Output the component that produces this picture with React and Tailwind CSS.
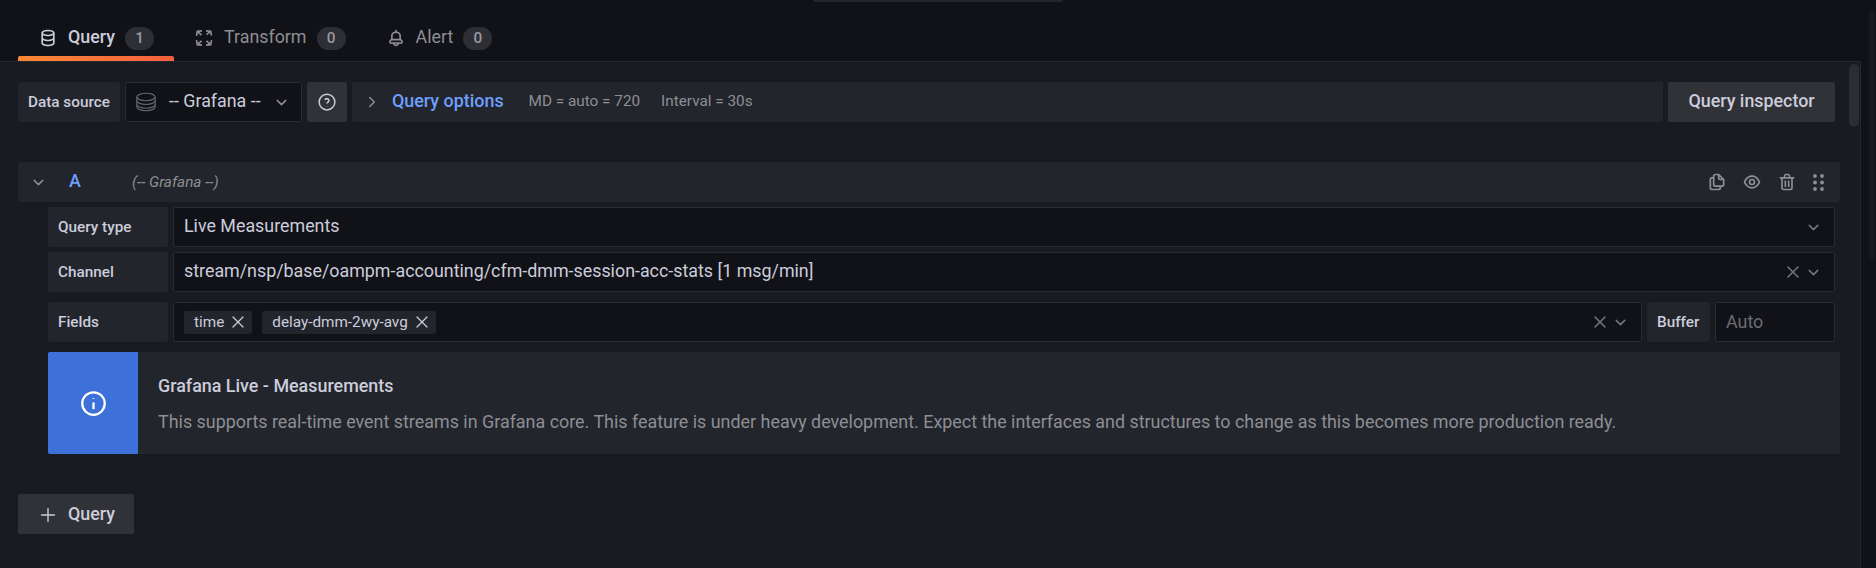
import { ChevronDown, ChevronRight, Plus, X } from 'lucide-react'

const font = { fontFamily: 'Roboto, sans-serif' }

function DbIcon({ className }) {
    return (
        <svg viewBox="0 0 24 24" fill="currentColor" className={className}>
            <path d="M12,2C8,2,4,3.37,4,6V18c0,2.63,4,4,8,4s8-1.37,8-4V6C20,3.37,16,2,12,2Zm6,16c0,.71-2.28,2-6,2s-6-1.29-6-2V14.73A13.16,13.16,0,0,0,12,16a13.16,13.16,0,0,0,6-1.27Zm0-6c0,.71-2.28,2-6,2s-6-1.29-6-2V8.73A13.16,13.16,0,0,0,12,10a13.16,13.16,0,0,0,6-1.27ZM12,8C8.28,8,6,6.71,6,6s2.28-2,6-2,6,1.29,6,2S15.72,8,12,8Z" />
        </svg>
    )
}

function StackIcon({ className }) {
    return (
        <svg viewBox="0 0 24 24" fill="none" stroke="currentColor" strokeWidth="1.4" className={className}>
            <ellipse cx="12" cy="6" rx="11" ry="4.5" />
            <path d="M1 6v4.5c0 2.5 4.9 4.5 11 4.5s11-2 11-4.5V6" />
            <path d="M1 10.5v4.5c0 2.5 4.9 4.5 11 4.5s11-2 11-4.5v-4.5" />
            <path d="M1 15v3c0 2.5 4.9 4.5 11 4.5s11-2 11-4.5v-3" />
        </svg>
    )
}

function TransformIcon({ className }) {
    return (
        <svg viewBox="0 0 24 24" fill="none" stroke="currentColor" strokeWidth="2" className={className}>
            <path d="M3 9.5L4 4l5.5-.5" />
            <path d="M4 4l5 4.5" />
            <path d="M14.5 3.5L20 4l1 5" />
            <path d="M15 8l5-4" />
            <path d="M3 14.5L4 20l5.5 .5" />
            <path d="M4 20l5-4.5" />
            <path d="M21 14.5L20 20l-5.5 .5" />
            <path d="M20 20l-5-4.5" />
        </svg>
    )
}

function BellIcon({ className }) {
    return (
        <svg viewBox="0 0 24 24" fill="currentColor" className={className}>
            <path d="M18,13.18V10a6,6,0,0,0-5-5.91V3a1,1,0,0,0-2,0V4.09A6,6,0,0,0,6,10v3.18A3,3,0,0,0,4,16v2a1,1,0,0,0,1,1H8.14a4,4,0,0,0,7.72,0H19a1,1,0,0,0,1-1V16A3,3,0,0,0,18,13.18ZM8,10a4,4,0,0,1,8,0v3H8Zm4,10a2,2,0,0,1-1.72-1h3.44A2,2,0,0,1,12,20Zm6-3H6V16a1,1,0,0,1,1-1H17a1,1,0,0,1,1,1Z" />
        </svg>
    )
}

function Label({ children, className = '' }) {
    return (
        <div className={`flex items-center h-10 pl-[10px] pt-[1px] whitespace-nowrap rounded-[3px] bg-[#22252b] text-[#ccccdc] text-[15.3px] font-medium ${className}`}>
            {children}
        </div>
    )
}

function Tab({ icon: Icon, label, count, active }) {
    return (
        <div className={`relative flex items-center h-[61px] pt-[15px] pl-5 pr-5 ${active ? 'text-[#ccccdc]' : 'text-[#8e8e93]'}`}>
            <Icon className="w-5 h-5 mr-[10px]" />
            <span className={`text-[17.85px] -mt-[2px] ${active ? 'font-medium' : ''}`}>{label}</span>
            <span className="ml-[10px] w-[29px] h-[23px] rounded-full bg-[#2d2f35] flex items-center justify-center text-[15.3px] text-[#9a9a9f] font-medium">{count}</span>
            {active && <div className="absolute left-0 right-0 bottom-0 h-[5px] rounded-t-[2px] bg-gradient-to-r from-[#ff8833] to-[#f55f3e]" />}
        </div>
    )
}

export default function App() {
    return (
        <div style={font} className="relative w-[1876px] h-[568px] overflow-hidden bg-[#111217] text-[#ccccdc]">
            <div className="absolute left-[813px] top-0 w-[250px] h-[2px] rounded-b-[2px] bg-[#23252b]" />
            <div className="absolute right-[1px] top-[10px] w-[6px] h-[250px] rounded-full bg-[#17191e]" />
            <div className="flex pl-[18px]">
                <Tab icon={DbIcon} label="Query" count="1" active />
                <Tab icon={TransformIcon} label="Transform" count="0" />
                <Tab icon={BellIcon} label="Alert" count="0" />
            </div>
            <div className="relative h-[507px] w-[1861px] bg-[#181b1f] border-t border-r border-[#25272c] pl-[18px] pr-[25px] pt-[20px]">
                <div className="absolute right-[1px] top-[2px] w-[10px] h-[63px] rounded-full bg-[#2b2d33]" />

                <div className="flex gap-[5px] h-10">
                    <Label className="w-[102px]">Data source</Label>
                    <div className="flex items-center w-[177px] h-10 rounded-[2px] border border-[#2a2c31] bg-[#111217] pl-[10px] text-[#ccccdc]">
                        <StackIcon className="w-5 h-5 text-[#66676c] mr-[13px]" />
                        <span className="text-[17.85px] -mt-[2px] whitespace-nowrap">-- Grafana --</span>
                        <ChevronDown className="w-[17px] h-[17px] ml-[12px] text-[#8e8e93] shrink-0" />
                    </div>
                    <div className="flex items-center justify-center w-10 h-10 rounded-[2px] bg-[#303237]">
                        <svg viewBox="0 0 24 24" fill="none" stroke="currentColor" strokeWidth="2" className="w-[18px] h-[18px] text-[#ccccdc]">
                            <circle cx="12" cy="12" r="10.5" />
                            <path d="M9.3 9.3a2.8 2.8 0 0 1 5.4.8c0 1.8-2.7 2.2-2.7 3.8" />
                            <path d="M12 17.2v.3" />
                        </svg>
                    </div>
                    <div className="flex-1 flex items-center h-10 rounded-[2px] bg-[#22252b] pl-[11px]">
                        <ChevronRight className="w-[18px] h-[18px] text-[#8e8e93]" />
                        <span className="ml-[11px] -mt-[2px] text-[17.9px] font-medium text-[#6e9fff]">Query options</span>
                        <span className="ml-[25px] -mt-[1px] text-[15.3px] text-[#8e8e93]">MD = auto = 720</span>
                        <span className="ml-[21px] -mt-[1px] text-[15.3px] text-[#8e8e93]">Interval = 30s</span>
                    </div>
                    <div className="flex items-center justify-center w-[167px] h-10 pb-[2px] rounded-[2px] bg-[#303237] text-[17.85px] font-medium text-[#ccccdc]">Query inspector</div>
                </div>

                <div className="mt-10 w-[1822px] flex items-center h-10 rounded-[2px] bg-[#22252b] pl-[12px] pr-[16px]">
                    <ChevronDown className="w-[17px] h-[17px] text-[#8e8e93]" />
                    <span className="ml-[22px] -mt-[2px] w-[63px] text-[17.85px] font-medium text-[#6e9fff]">A</span>
                    <span className="text-[15.3px] italic text-[#8e8e93]">(-- Grafana --)</span>
                    <div className="ml-auto flex items-center gap-[15px] text-[#8e8e93]">
                        <svg viewBox="0 0 24 24" fill="currentColor" className="w-5 h-5">
                            <path d="M21,8.94a1.31,1.31,0,0,0-.06-.27l0-.09a1.07,1.07,0,0,0-.19-.28h0l-6-6h0a1.07,1.07,0,0,0-.28-.19.32.32,0,0,0-.09,0A.88.88,0,0,0,14.05,2H10A3,3,0,0,0,7,5V6H6A3,3,0,0,0,3,9V19a3,3,0,0,0,3,3h8a3,3,0,0,0,3-3V18h1a3,3,0,0,0,3-3V9S21,9,21,8.94ZM15,5.41,17.59,8H16a1,1,0,0,1-1-1ZM15,19a1,1,0,0,1-1,1H6a1,1,0,0,1-1-1V9A1,1,0,0,1,6,8H7v7a3,3,0,0,0,3,3h5Zm4-4a1,1,0,0,1-1,1H10a1,1,0,0,1-1-1V5a1,1,0,0,1,1-1h3V7a3,3,0,0,0,3,3h3Z" />
                        </svg>
                        <svg viewBox="0 0 24 24" fill="currentColor" className="w-5 h-5">
                            <path d="M21.92,11.6C19.9,6.91,16.1,4,12,4S4.1,6.91,2.08,11.6a1,1,0,0,0,0,.8C4.1,17.09,7.9,20,12,20s7.9-2.91,9.92-7.6A1,1,0,0,0,21.92,11.6ZM12,18c-3.17,0-6.17-2.29-7.9-6C5.83,8.29,8.83,6,12,6s6.17,2.29,7.9,6C18.17,15.71,15.17,18,12,18ZM12,8a4,4,0,1,0,4,4A4,4,0,0,0,12,8Zm0,6a2,2,0,1,1,2-2A2,2,0,0,1,12,14Z" />
                        </svg>
                        <svg viewBox="0 0 24 24" fill="currentColor" className="w-5 h-5">
                            <path d="M10,18a1,1,0,0,0,1-1V11a1,1,0,0,0-2,0v6A1,1,0,0,0,10,18ZM20,6H16V5a3,3,0,0,0-3-3H11A3,3,0,0,0,8,5V6H4A1,1,0,0,0,4,8H5V19a3,3,0,0,0,3,3h8a3,3,0,0,0,3-3V8h1a1,1,0,0,0,0-2ZM10,5a1,1,0,0,1,1-1h2a1,1,0,0,1,1,1V6H10Zm7,14a1,1,0,0,1-1,1H8a1,1,0,0,1-1-1V8H17Zm-3-1a1,1,0,0,0,1-1V11a1,1,0,0,0-2,0v6A1,1,0,0,0,14,18Z" />
                        </svg>
                        <svg viewBox="0 0 11 17" fill="currentColor" className="ml-[1px] w-[11px] h-[17px]">
                            <circle cx="2" cy="2" r="1.9" /><circle cx="9" cy="2" r="1.9" />
                            <circle cx="2" cy="8.5" r="1.9" /><circle cx="9" cy="8.5" r="1.9" />
                            <circle cx="2" cy="15" r="1.9" /><circle cx="9" cy="15" r="1.9" />
                        </svg>
                    </div>
                </div>

                <div className="ml-[30px] w-[1792px]">
                    <div className="mt-[5px] flex gap-[5px] w-[1787px]">
                        <Label className="w-[120px]">Query type</Label>
                        <div className="flex-1 flex items-center h-10 rounded-[2px] border border-[#2a2c31] bg-[#111217] pl-[10px] pr-[12px] text-[17.85px]">
                            <span className="-mt-[2px]">Live Measurements</span>
                            <ChevronDown className="ml-auto w-[17px] h-[17px] text-[#77787d]" />
                        </div>
                    </div>
                    <div className="mt-[5px] flex gap-[5px] w-[1787px]">
                        <Label className="w-[120px]">Channel</Label>
                        <div className="flex-1 flex items-center h-10 rounded-[2px] border border-[#2a2c31] bg-[#111217] pl-[10px] pr-[12px] text-[17.85px]">
                            <span className="-mt-[2px]">stream/nsp/base/oampm-accounting/cfm-dmm-session-acc-stats [1 msg/min]</span>
                            <X className="ml-auto w-5 h-5 text-[#77787d]" strokeWidth={1.8} />
                            <ChevronDown className="ml-[2px] w-[17px] h-[17px] text-[#77787d]" />
                        </div>
                    </div>
                    <div className="mt-[10px] flex gap-[5px] w-[1787px]">
                        <Label className="w-[120px]">Fields</Label>
                        <div className="flex-1 flex items-center h-10 rounded-[2px] border border-[#2a2c31] bg-[#111217] pl-[10px] pr-[12px] text-[15.3px]">
                            <span className="flex items-center h-[23px] pl-[10px] pr-[10px] rounded-[2px] bg-[#22252b]">
                                time
                                <X className="ml-[4px] -mr-[6px] w-5 h-5" strokeWidth={1.5} />
                            </span>
                            <span className="flex items-center h-[23px] ml-[10px] pl-[10px] pr-[10px] rounded-[2px] bg-[#22252b]">
                                delay-dmm-2wy-avg
                                <X className="ml-[4px] -mr-[6px] w-5 h-5" strokeWidth={1.5} />
                            </span>
                            <X className="ml-auto w-5 h-5 text-[#77787d]" strokeWidth={1.8} />
                            <ChevronDown className="ml-[2px] w-[17px] h-[17px] text-[#77787d]" />
                        </div>
                        <Label className="w-[63px]">Buffer</Label>
                        <div className="flex items-center w-[120px] h-10 pt-[1px] rounded-[2px] border border-[#2a2c31] bg-[#111217] px-[10px] text-[17.85px] text-[#6c6d72]">Auto</div>
                    </div>
                    <div className="mt-[10px] flex h-[102px] rounded-[2px] bg-[#22252b]">
                        <div className="flex items-center justify-center w-[90px] bg-[#3d71d9] rounded-l-[2px]">
                            <svg viewBox="0 0 24 24" fill="none" stroke="white" strokeWidth="2" className="w-[27px] h-[27px]">
                                <circle cx="12" cy="12" r="10" />
                                <path d="M12 11v6" />
                                <path d="M12 7.2v.6" />
                            </svg>
                        </div>
                        <div className="pl-5 pt-[21px]">
                            <div className="text-[17.9px] font-medium text-[#ccccdc]">Grafana Live - Measurements</div>
                            <div className="mt-[9px] text-[17.9px] text-[#8e8e93]">This supports real-time event streams in Grafana core. This feature is under heavy development. Expect the interfaces and structures to change as this becomes more production ready.</div>
                        </div>
                    </div>
                </div>

                <div className="mt-10 flex items-center w-[116px] h-10 pl-[19px] pt-[1px] rounded-[2px] bg-[#303237] text-[17.85px] font-medium">
                    <Plus className="w-[22px] h-[22px] mr-[9px] text-[#ccccdc]" strokeWidth={1.5} />
                    Query
                </div>
            </div>
        </div>
    )
}
